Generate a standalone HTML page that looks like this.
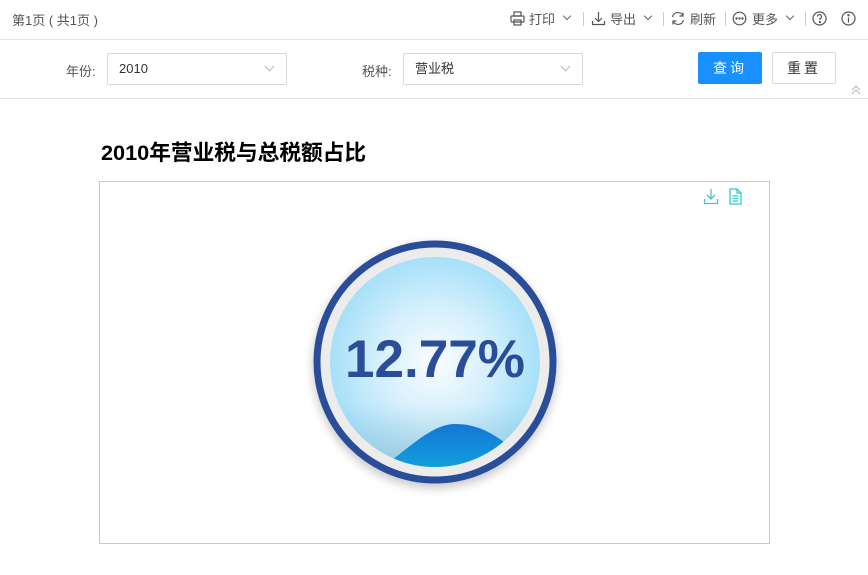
<!DOCTYPE html>
<html><head><meta charset="utf-8"><style>
*{margin:0;padding:0;box-sizing:border-box}
body{width:868px;height:575px;background:#fff;font-family:"Liberation Sans","Noto Sans CJK SC",sans-serif;position:relative;overflow:hidden;color:#333}
.a{position:absolute}
.t{font-size:13px;color:#555}
.sel{position:absolute;height:32px;border:1px solid #d9d9d9;border-radius:2px;font-size:13px;color:#333;padding-left:11px;line-height:30px;background:#fff}
.chev{position:absolute;width:7px;height:7px;border-right:1px solid #bbb;border-bottom:1px solid #bbb;transform:rotate(45deg)}
.sep{position:absolute;top:12px;width:1px;height:14px;background:#ccc}
.tc{position:absolute;width:6px;height:6px;border-right:1.3px solid #666;border-bottom:1.3px solid #666;transform:rotate(45deg)}
</style></head><body>
<div class="a t" style="left:12px;top:10px">第1页 ( 共1页 )</div>
<div class="a" style="left:0;top:39px;width:868px;height:1px;background:#e3e3e3"></div>
<svg class="a" style="left:510px;top:11px" width="15" height="15" viewBox="0 0 15 15" fill="none" stroke="#555" stroke-width="1.2"><rect x="4" y="1" width="7" height="4"/><rect x="1" y="5" width="13" height="6" rx="1"/><rect x="4" y="9" width="7" height="5"/></svg>
<div class="a t" style="left:529px;top:9px">打印</div><div class="tc" style="left:564px;top:13px"></div>
<div class="sep" style="left:583px"></div>
<svg class="a" style="left:591px;top:11px" width="15" height="15" viewBox="0 0 15 15" fill="none" stroke="#555" stroke-width="1.2"><path d="M7.5 1v9M4 7l3.5 3.5L11 7M1.5 10v3.5h12V10"/></svg>
<div class="a t" style="left:610px;top:9px">导出</div><div class="tc" style="left:645px;top:13px"></div>
<div class="sep" style="left:663px"></div>
<svg class="a" style="left:670px;top:11px" width="16" height="15" viewBox="0 0 16 15" fill="none" stroke="#555" stroke-width="1.2"><path d="M2.5 6A5.5 5.5 0 0 1 13 5M13.5 9A5.5 5.5 0 0 1 3 10M13 1.5V5H9.5M3 13.5V10h3.5"/></svg>
<div class="a t" style="left:690px;top:9px">刷新</div>
<div class="sep" style="left:725px"></div>
<svg class="a" style="left:732px;top:11px" width="15" height="15" viewBox="0 0 15 15" fill="none" stroke="#555" stroke-width="1.2"><circle cx="7.5" cy="7.5" r="6.3"/><circle cx="4.5" cy="7.5" r=".6" fill="#555"/><circle cx="7.5" cy="7.5" r=".6" fill="#555"/><circle cx="10.5" cy="7.5" r=".6" fill="#555"/></svg>
<div class="a t" style="left:752px;top:9px">更多</div><div class="tc" style="left:787px;top:13px"></div>
<div class="sep" style="left:805px"></div>
<svg class="a" style="left:812px;top:11px" width="15" height="15" viewBox="0 0 15 15" fill="none" stroke="#555" stroke-width="1.2"><circle cx="7.5" cy="7.5" r="6.5"/><path d="M5.5 5.5a2 2 0 1 1 2.5 2v1.5"/><circle cx="8" cy="11" r=".5" fill="#555"/></svg>
<svg class="a" style="left:841px;top:11px" width="15" height="15" viewBox="0 0 15 15" fill="none" stroke="#555" stroke-width="1.2"><circle cx="7.5" cy="7.5" r="6.5"/><path d="M7.5 6.5v5"/><circle cx="7.5" cy="4.3" r=".6" fill="#555"/></svg>
<div class="a t" style="left:66px;top:61px">年份:</div>
<div class="sel" style="left:107px;top:53px;width:180px">2010</div><div class="chev" style="left:266px;top:63px"></div>
<div class="a t" style="left:362px;top:61px">税种:</div>
<div class="sel" style="left:403px;top:53px;width:180px">营业税</div><div class="chev" style="left:562px;top:63px"></div>
<div class="a" style="left:698px;top:52px;width:64px;height:32px;background:#1890ff;border-radius:2px;color:#fff;font-size:14px;text-align:center;line-height:32px;letter-spacing:3px">查询</div>
<div class="a" style="left:772px;top:52px;width:64px;height:32px;border:1px solid #d9d9d9;border-radius:2px;color:#333;font-size:14px;text-align:center;line-height:30px;letter-spacing:3px">重置</div>
<svg class="a" style="left:850px;top:84px" width="12" height="12" viewBox="0 0 12 12" fill="none" stroke="#bbb" stroke-width="1"><path d="M2 6l4-4 4 4M2 10l4-4 4 4"/></svg>
<div class="a" style="left:0;top:98px;width:868px;height:1px;background:#e3e3e3"></div>
<div class="a" style="left:101px;top:136px;font-size:21.7px;font-weight:bold;color:#000">2010年营业税与总税额占比</div>
<div class="a" style="left:99px;top:181px;width:671px;height:363px;border:1px solid #c8c8c8"></div>
<svg class="a" style="left:703px;top:188px" width="16" height="17" viewBox="0 0 16 17" fill="none" stroke="#3cc8c8" stroke-width="1.3"><path d="M8 1v10M4 7l4 4 4-4M1.5 11v4.5h13V11"/></svg>
<svg class="a" style="left:729px;top:188px" width="13" height="17" viewBox="0 0 13 17" fill="none" stroke="#3cc8c8" stroke-width="1.3"><path d="M1 1h7l4 4v11H1z M8 1v4h4M3.5 8h6M3.5 10.5h6M3.5 13h6"/></svg>
<svg class="a" style="left:300px;top:230px" width="270" height="270" viewBox="0 0 270 270">
<defs>
<radialGradient id="g" cx="0.5" cy="0.5" r="0.5"><stop offset="0" stop-color="#fafdff"/><stop offset="0.55" stop-color="#d3effc"/><stop offset="1" stop-color="#a6e0f8"/></radialGradient>
<linearGradient id="sh" x1="0" y1="0" x2="0" y2="1"><stop offset="0" stop-color="#8fb8cc" stop-opacity="0"/><stop offset="1" stop-color="#8fb8cc" stop-opacity="0.6"/></linearGradient>
<linearGradient id="w" x1="0" y1="0" x2="0" y2="1"><stop offset="0" stop-color="#1476d6"/><stop offset="1" stop-color="#10b4e0"/></linearGradient>
<filter id="s" x="-20%" y="-20%" width="140%" height="140%"><feGaussianBlur stdDeviation="5"/></filter>
<clipPath id="c"><circle cx="135" cy="132" r="105"/></clipPath>
</defs>
<circle cx="135" cy="136" r="122" fill="#000" opacity="0.22" filter="url(#s)"/>
<circle cx="135" cy="132" r="118" fill="#ececec" stroke="#2a4d9a" stroke-width="7"/>
<circle cx="135" cy="132" r="105" fill="url(#g)"/>
<g clip-path="url(#c)">
<rect x="30" y="175" width="210" height="70" fill="url(#sh)"/>
<path d="M60 250 C95 235 125 194 155 194 C180 194 195 205 215 220 C225 228 235 240 245 250 L245 260 L60 260Z" fill="url(#w)"/>
</g>
<text x="135" y="147" text-anchor="middle" font-family="Liberation Sans,sans-serif" font-weight="bold" font-size="53" fill="#2a4d9a" textLength="180" lengthAdjust="spacingAndGlyphs">12.77%</text>
</svg>
</body></html>
